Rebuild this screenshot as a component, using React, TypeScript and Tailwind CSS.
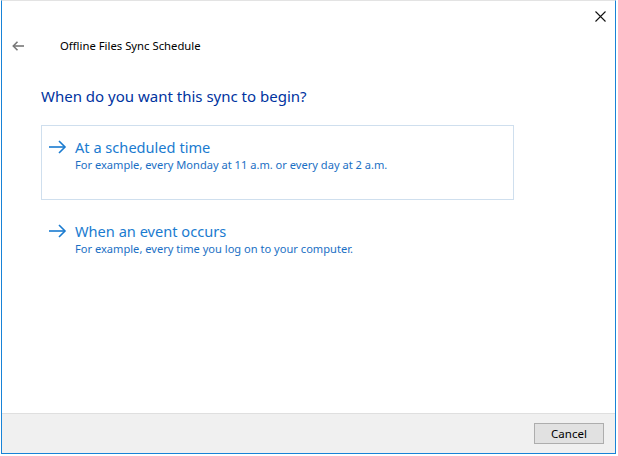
const font = { fontFamily: '"Noto Sans", "Open Sans", sans-serif' };

function ArrowRight() {
  return (
    <svg width="19" height="14" viewBox="0 0 19 14" fill="none" stroke="#1a7bd0" strokeWidth="1.6">
      <path d="M1 7h16" />
      <path d="M11 1l6 6-6 6" />
    </svg>
  );
}

function Option({ title, detail, selected }: { title: string; detail: string; selected?: boolean }) {
  return (
    <div
      className={`h-[75px] w-[473px] border pl-[6px] pt-[11px] ${
        selected ? "border-[#cfdfee]" : "border-transparent"
      }`}
    >
      <div className="flex items-center h-[20px]">
        <ArrowRight />
        <span className="ml-[8px] text-[14.6px] leading-[20px] text-[#1a7bd0]">{title}</span>
      </div>
      <div className="pl-[27px] text-[11.1px] leading-[16px] text-[#1a6fc4]">{detail}</div>
    </div>
  );
}

export default function App() {
  return (
    <div className="w-[618px] h-[456px] bg-white overflow-hidden" style={font}>
      <div className="ml-px w-[615px] h-[454px] border border-t-[#e3e3e3] border-l-[#1883d7] border-r-[#1883d7] border-b-[#1883d7] flex flex-col">
        {/* title bar */}
        <div className="h-[31px] flex justify-end pr-[9px] pt-[10px]">
          <svg width="11" height="11" viewBox="0 0 11 11" stroke="#111" strokeWidth="1.1">
            <path d="M0.5 0.5l10 10M10.5 0.5l-10 10" />
          </svg>
        </div>
        {/* nav row */}
        <div className="h-[28px] flex items-center">
          <svg className="ml-[10px]" width="12" height="10" viewBox="0 0 12 10" fill="none" stroke="#777" strokeWidth="1.6">
            <path d="M1 5h11" />
            <path d="M5.5 0.8L1.3 5l4.2 4.2" />
          </svg>
          <span className="ml-[36px] text-[11.3px] text-black">Offline Files Sync Schedule</span>
        </div>
        {/* content */}
        <div className="flex-1 pl-[39px]">
          <div className="mt-[25px] text-[15px] leading-[22px] text-[#0033a0]">When do you want this sync to begin?</div>
          <div className="mt-[18px] flex flex-col gap-[9px]">
            <Option
              selected
              title="At a scheduled time"
              detail="For example, every Monday at 11 a.m. or every day at 2 a.m."
            />
            <Option title="When an event occurs" detail="For example, every time you log on to your computer." />
          </div>
        </div>
        {/* footer */}
        <div className="h-[40px] border-t border-[#dfdfdf] bg-[#f0f0f0] flex justify-end items-start pr-[11px] pt-[9px]">
          <button className="w-[70px] h-[21px] border border-[#adadad] bg-[#e1e1e1] text-[11.5px] text-black leading-none">
            Cancel
          </button>
        </div>
      </div>
    </div>
  );
}
